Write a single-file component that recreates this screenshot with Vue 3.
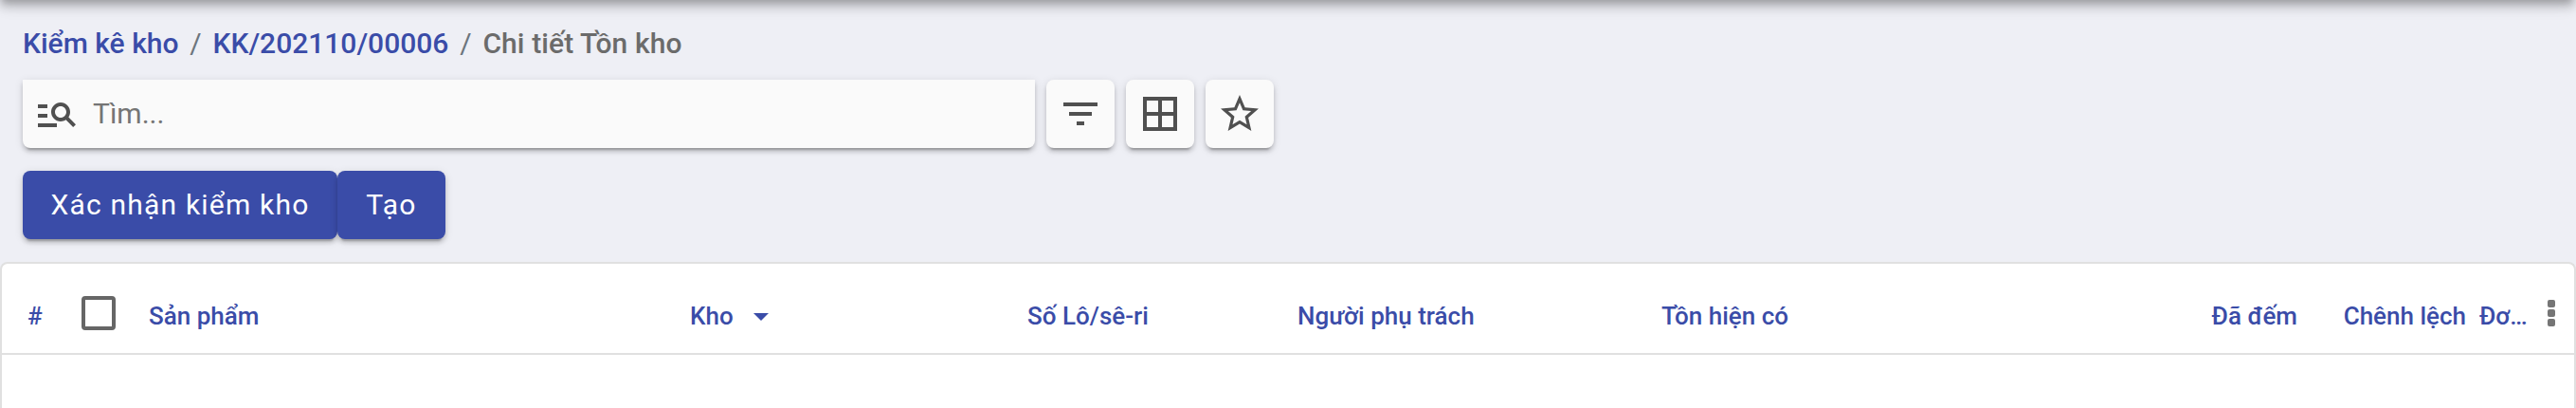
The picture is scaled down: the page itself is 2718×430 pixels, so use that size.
<script setup>
const columns = [
  { key: 'index', label: '#' },
  { key: 'select', checkbox: true },
  { key: 'product', label: 'Sản phẩm' },
  { key: 'warehouse', label: 'Kho', sorted: true },
  { key: 'lot', label: 'Số Lô/sê-ri' },
  { key: 'owner', label: 'Người phụ trách' },
  { key: 'onhand', label: 'Tồn hiện có' },
  { key: 'counted', label: 'Đã đếm' },
  { key: 'diff', label: 'Chênh lệch' },
  { key: 'uom', label: 'Đơ…' },
  { key: 'menu', menu: true }
]
const tools = [
  { name: 'filter', path: 'M10 18h4v-2h-4v2zM3 6v2h18V6H3zm3 7h12v-2H6v2z' },
  { name: 'grid', path: 'M3 3v18h18V3H3zm8 16H5v-6h6v6zm0-8H5V5h6v6zm8 8h-6v-6h6v6zm0-8h-6V5h6v6z' },
  { name: 'star', path: 'M22 9.24l-7.19-.62L12 2 9.19 8.63 2 9.24l5.46 4.73L5.82 21 12 17.27 18.18 21l-1.63-7.03L22 9.24zM12 15.4l-3.76 2.27 1-4.28-3.32-2.88 4.38-.38L12 6.1l1.71 4.04 4.38.38-3.32 2.88 1 4.28L12 15.4z' }
]
</script>

<template>
  <div class="page">
    <nav class="crumbs">
      <a class="link first">Kiểm kê kho</a><span class="sep">/</span>
      <a class="link code">KK/202110/00006</a><span class="sep">/</span>
      <span class="current">Chi tiết Tồn kho</span>
    </nav>
    <div class="toolbar">
      <div class="search">
        <svg class="icon" viewBox="0 0 24 24"><path d="M7 9H2V7h5v2zm0 3H2v2h5v-2zm13.59 7l-3.83-3.83c-.8.52-1.74.83-2.76.83-2.76 0-5-2.24-5-5s2.24-5 5-5 5 2.24 5 5c0 1.02-.31 1.96-.83 2.75L22 17.59 20.59 19zM17 11c0-1.65-1.35-3-3-3s-3 1.35-3 3 1.35 3 3 3 3-1.35 3-3zM2 19h10v-2H2v2z" /></svg>
        <span class="placeholder">Tìm...</span>
      </div>
      <button v-for="t in tools" :key="t.name" class="tool">
        <svg class="icon" viewBox="0 0 24 24"><path :d="t.path" /></svg>
      </button>
    </div>
    <div class="actions">
      <button class="action confirm">Xác nhận kiểm kho</button>
      <button class="action create">Tạo</button>
    </div>
    <section class="table">
      <div class="head">
        <div v-for="c in columns" :key="c.key" class="cell" :class="c.key">
          <span v-if="c.checkbox" class="checkbox"></span>
          <span v-else-if="c.menu" class="dots"><i></i><i></i><i></i></span>
          <span v-else>{{ c.label }}</span>
          <svg v-if="c.sorted" class="arrow" viewBox="0 0 16 8"><path d="M0 0h16L8 8z" /></svg>
        </div>
      </div>
    </section>
  </div>
</template>

<style>
body { margin: 0; }
</style>

<style scoped>
.page {
  position: relative;
  display: flex;
  flex-direction: column;
  box-sizing: border-box;
  height: 430px;
  overflow: hidden;
  background: #eeeff5;
  font-family: Roboto, "Noto Sans", sans-serif;
}
.page::before {
  content: "";
  position: absolute;
  top: -100px;
  left: 0;
  right: 2px;
  height: 100px;
  box-shadow: 0 4px 8px -2px rgba(0, 0, 0, .2), 0 8px 10px rgba(0, 0, 0, .14), 0 2px 20px rgba(0, 0, 0, .12);
}
.crumbs {
  display: flex;
  align-items: center;
  height: 84px;
  padding: 8px 24px 0;
  box-sizing: border-box;
  font-size: 30px;
  line-height: 36px;
  white-space: nowrap;
}
.link { color: #3a4ca8; font-weight: 500; }
.sep { width: 36px; text-align: center; color: #6c757d; }
.current { color: #6b6b6b; font-weight: 500; letter-spacing: .1px; }
.toolbar { display: flex; gap: 12px; padding-left: 24px; height: 72px; }
.search, .tool {
  display: flex;
  align-items: center;
  box-sizing: border-box;
  height: 72px;
  border: 0;
  border-radius: 8px;
  background: #fafafa;
  box-shadow: 0 6px 2px -4px rgba(0, 0, 0, .2), 0 4px 4px rgba(0, 0, 0, .14), 0 2px 10px rgba(0, 0, 0, .12);
}
.search { width: 1068px; padding-left: 12px; border-radius: 0 0 8px 8px; }
.tool { width: 72px; padding: 0 12px; }
.icon { width: 48px; height: 48px; flex: none; fill: #505050; }
.placeholder { margin-left: 14px; padding-bottom: 2px; font-size: 30px; color: #757575; }
.actions { display: flex; padding: 24px 24px; height: 72px; }
.action {
  height: 72px;
  padding: 0 0 2px;
  border: 0;
  border-radius: 8px;
  background: #3a4ca8;
  color: #fff;
  font-family: inherit;
  font-size: 30px;
  font-weight: 400;
  letter-spacing: 1.2px;
  white-space: nowrap;
  box-shadow: 0 6px 2px -4px rgba(0, 0, 0, .2), 0 4px 4px rgba(0, 0, 0, .14), 0 2px 10px rgba(0, 0, 0, .12);
}
.confirm { width: 332px; }
.create { width: 114px; }
.table {
  flex: 1;
  border: 2px solid #e0e0e0;
  border-bottom: 0;
  border-radius: 8px 8px 0 0;
  background: #fff;
}
.head {
  display: grid;
  grid-template-columns: 54px 72px 600px 356px 285px 384px 551px 120px 192px 50px 50px;
  height: 94px;
  border-bottom: 2px solid #e0e0e0;
}
.cell {
  display: flex;
  align-items: center;
  padding-top: 16px;
  color: #3a4ca8;
  font-size: 26px;
  font-weight: 500;
  white-space: nowrap;
}
.index { padding-left: 27px; }
.select { padding: 10px 0 0 30px; }
.product { padding-left: 29px; }
.counted, .diff { justify-content: flex-end; }
.diff { padding-right: 14px; }
.checkbox { width: 28px; height: 28px; border: 4px solid #666; border-radius: 4px; }
.arrow { width: 16px; height: 8px; margin: 1px 0 0 21px; fill: #3a4ca8; }
.menu { justify-content: flex-end; padding: 10px 20px 0 0; }
.dots { display: flex; flex-direction: column; gap: 2px; }
.dots i { width: 8px; height: 8px; border-radius: 2px; background: #757575; }
</style>
